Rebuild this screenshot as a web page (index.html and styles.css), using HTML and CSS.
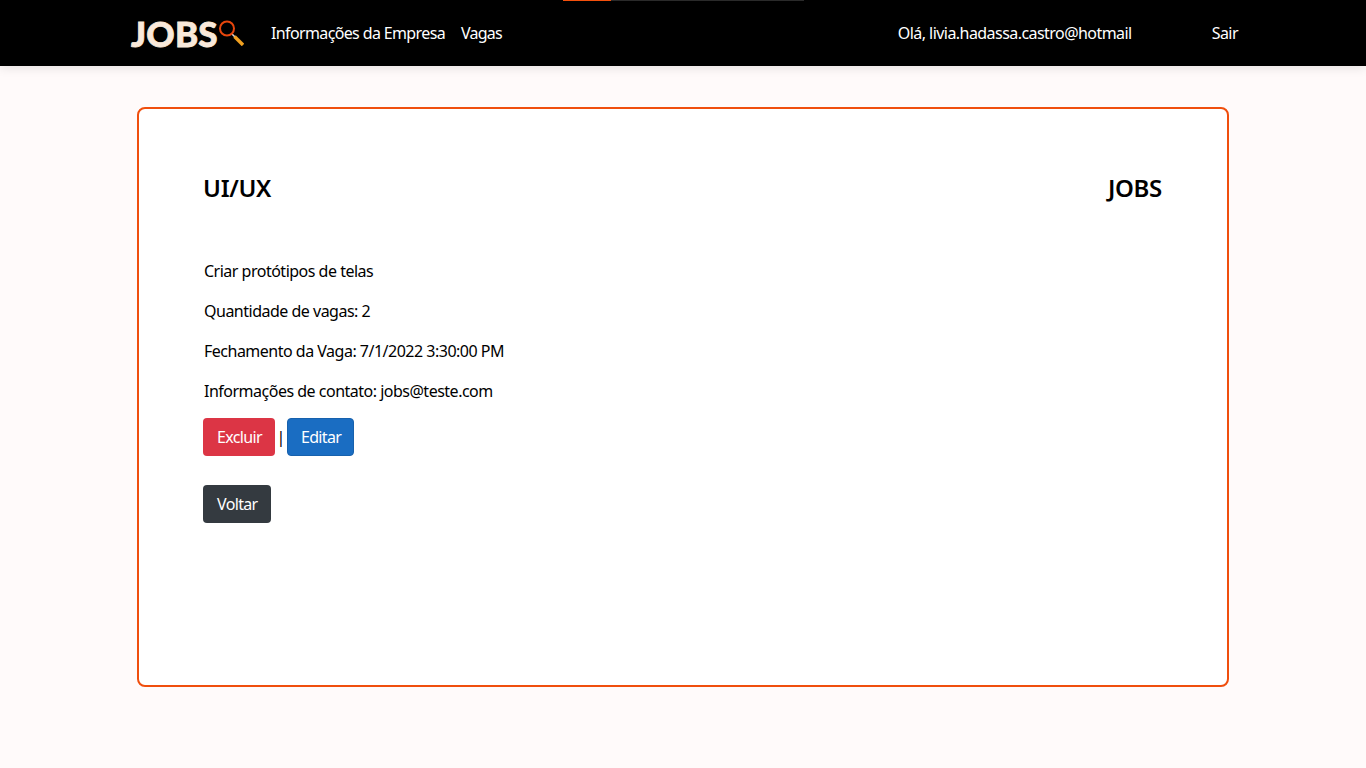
FILE: index.html
```html
<!DOCTYPE html>
<html lang="pt-BR">
<head>
<meta charset="utf-8">
<title>Jobs</title>
<link rel="stylesheet" href="styles.css">
</head>
<body>
<div class="progress"><div class="progress-fill"></div></div>
<header class="navbar">
  <a class="brand" href="#">
    <span class="brand-text">JOBS</span>
    <svg class="brand-icon" width="26" height="26" viewBox="0 0 26 26" aria-hidden="true">
      <line x1="14" y1="14" x2="17" y2="17" stroke="#d8d8d8" stroke-width="1.6"/>
      <line x1="16.5" y1="16.5" x2="25" y2="25" stroke="#f0a020" stroke-width="3.4"/>
      <circle cx="9" cy="8.5" r="7" fill="none" stroke="#e8460c" stroke-width="2"/>
    </svg>
  </a>
  <nav class="nav-links">
    <a class="nav-info" href="#">Informações da Empresa</a>
    <a class="nav-vagas" href="#">Vagas</a>
  </nav>
  <div class="nav-user">
    <span class="hello">Olá, livia.hadassa.castro@hotmail</span>
    <a href="#">Sair</a>
  </div>
</header>
<main class="card">
  <div class="title-row">
    <h2>UI/UX</h2>
    <h2>JOBS</h2>
  </div>
  <p>Criar protótipos de telas</p>
  <p>Quantidade de vagas: 2</p>
  <p>Fechamento da Vaga: 7/1/2022 3:30:00 PM</p>
  <p>Informações de contato: jobs@teste.com</p>
  <div class="actions">
    <a class="btn btn-danger" href="#">Excluir</a>
    <span class="sep">|</span>
    <a class="btn btn-primary" href="#">Editar</a>
  </div>
  <div class="back">
    <a class="btn btn-dark" href="#">Voltar</a>
  </div>
</main>
</body>
</html>
```
FILE: styles.css
```css
* { box-sizing: border-box; }
html, body { margin: 0; height: 100%; }
body {
  background: #fffafa;
  color: #000;
  font-family: "Noto Sans", "Open Sans", sans-serif;
  font-size: 16px;
  line-height: 24px;
  overflow: hidden;
  position: relative;
}
a { color: inherit; text-decoration: none; }
.progress {
  position: absolute;
  left: 563px;
  top: 0;
  width: 241px;
  height: 1px;
  background: #2a2a2a;
  z-index: 2;
}
.progress-fill { width: 48px; height: 1px; background: #f4500c; }
.navbar {
  height: 66px;
  background: #000;
  color: #fff;
  display: flex;
  align-items: center;
  padding: 0 128px 0 131px;
  box-shadow: 0 2px 10px rgba(0, 0, 0, .1);
}
.brand { display: flex; align-items: center; width: 140px; height: 32px; }
.brand-text {
  font-family: Lato, sans-serif;
  font-weight: 900;
  font-size: 35px;
  line-height: 32px;
  letter-spacing: .2px;
  color: #f9e9da;
  -webkit-text-stroke: .8px #f9e9da;
}
.brand-icon { flex: none; }
.nav-links { display: flex; gap: 16px; }
.nav-info { letter-spacing: -.63px; }
.nav-vagas { letter-spacing: -.8px; }
.nav-user { margin-left: auto; display: flex; letter-spacing: -.55px; }
.hello { margin-right: 80px; }
.card {
  width: 1092px;
  height: 580px;
  margin: 41px 0 0 137px;
  padding: 63px 65px 0;
  background: #fff;
  border: 2px solid #f04e0d;
  border-radius: 8px;
}
.title-row {
  display: flex;
  justify-content: space-between;
  margin: 0 0 55px -1px;
}
h2 { margin: 0; font-size: 24px; line-height: 32px; font-weight: 600; letter-spacing: -.3px; }
p { margin: 0 0 16px; letter-spacing: -.5px; }
.actions { display: flex; align-items: center; margin-top: -1px; }
.sep { width: 12px; text-align: center; }
.back { margin-top: 29px; display: flex; }
.btn {
  display: inline-block;
  height: 38px;
  padding: 6px 12px 6px 13px;
  border: 1px solid transparent;
  border-radius: 4px;
  color: #fff;
  letter-spacing: -.65px;
}
.btn-danger, .btn-dark { margin-left: -1px; }
.btn-danger { background: #dc3545; }
.btn-primary { background: #1a6dc2; border-color: #1761ad; }
.btn-dark { background: #343a40; }
```
